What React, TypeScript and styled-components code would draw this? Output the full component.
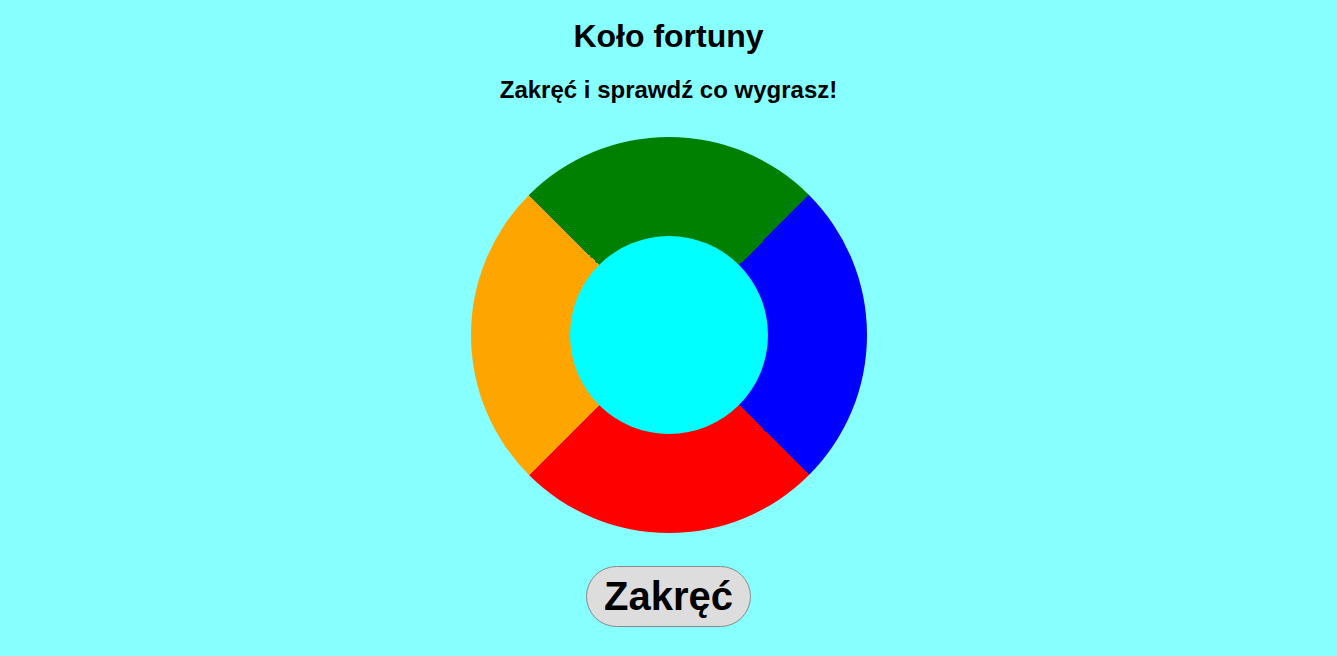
import React from "react";
import styled, { createGlobalStyle } from "styled-components";

const GlobalStyle = createGlobalStyle`
  html, body {
    margin: 0;
    padding: 0;
    background: #88ffff;
    font-family: "Liberation Sans", Arial, sans-serif;
    color: #000;
  }
`;

const Page = styled.main`
  display: flex;
  flex-direction: column;
  align-items: center;
  min-height: 656px;
`;

const Title = styled.h1`
  margin: 18px 0 0;
  font-size: 32px;
  font-weight: bold;
  line-height: normal;
`;

const Subtitle = styled.h2`
  margin: 21px 0 0;
  font-size: 24px;
  font-weight: bold;
  line-height: normal;
`;

const Wheel = styled.div`
  margin-top: 33px;
  width: 396px;
  height: 396px;
  border-radius: 50%;
  display: grid;
  place-items: center;
  background: conic-gradient(
    from -45deg,
    #008000 0deg 90deg,
    #0000ff 90deg 180deg,
    #ff0000 180deg 270deg,
    #ffa500 270deg 360deg
  );
`;

const Hub = styled.div`
  width: 198px;
  height: 198px;
  border-radius: 50%;
  background: #00ffff;
`;

const SpinButton = styled.button`
  margin-top: 33px;
  padding: 6px 17px;
  font-family: "Liberation Sans", Arial, sans-serif;
  font-size: 40px;
  font-weight: bold;
  line-height: 47px;
  color: #000;
  background: #dddddd;
  border: 1px solid #8a8a8a;
  border-radius: 31px;
  cursor: pointer;
`;

export default function App() {
  return (
    <>
      <GlobalStyle />
      <Page>
        <Title>Koło fortuny</Title>
        <Subtitle>Zakręć i sprawdź co wygrasz!</Subtitle>
        <Wheel>
          <Hub />
        </Wheel>
        <SpinButton>Zakręć</SpinButton>
      </Page>
    </>
  );
}
